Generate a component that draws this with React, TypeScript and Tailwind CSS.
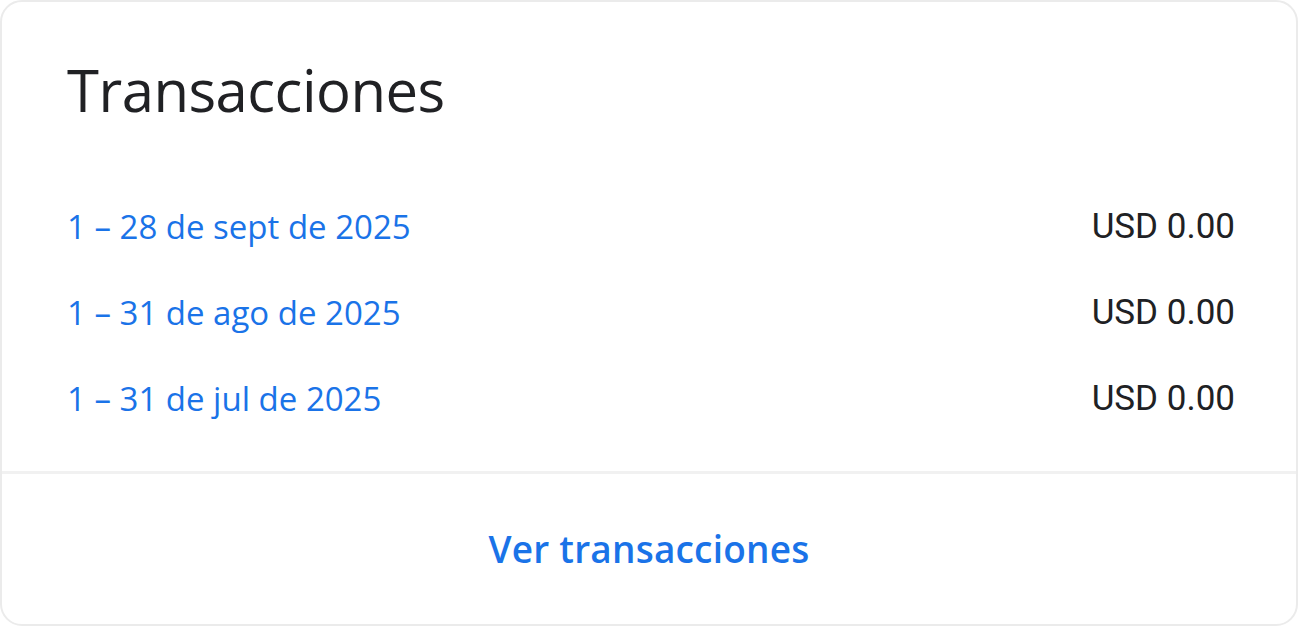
import React from 'react';

const periods = [
  { label: '1 – 28 de sept de 2025', amount: 'USD 0.00' },
  { label: '1 – 31 de ago de 2025', amount: 'USD 0.00' },
  { label: '1 – 31 de jul de 2025', amount: 'USD 0.00' },
];

export default function App() {
  return (
    <div className="w-[1298px] h-[626px] bg-white" style={{ fontFamily: '"Open Sans", Roboto, sans-serif' }}>
      <div className="h-full flex flex-col border-2 border-[#ebebeb] rounded-[22px] overflow-hidden">
        <div className="flex-1 pl-[65px] pr-[61px]">
          <h2 className="mt-[49px] h-[76px] flex items-center text-[58px] font-normal text-[#202124] tracking-[-0.5px]">Transacciones</h2>
          <div className="mt-[57px] flex flex-col">
            {periods.map((p) => (
              <div key={p.label} className="h-[86px] flex items-center justify-between">
                <a className="text-[33px] text-[#1a73e8] cursor-pointer">{p.label}</a>
                <span className="text-[35px] text-[#202124]" style={{ fontFamily: 'Roboto, sans-serif' }}>{p.amount}</span>
              </div>
            ))}
          </div>
        </div>
        <div className="h-[3px] bg-[#f1f1f1]" />
        <div className="h-[150px] flex items-center justify-center">
          <a className="text-[37px] font-semibold text-[#1a73e8] tracking-[0.2px] cursor-pointer">Ver transacciones</a>
        </div>
      </div>
    </div>
  );
}
